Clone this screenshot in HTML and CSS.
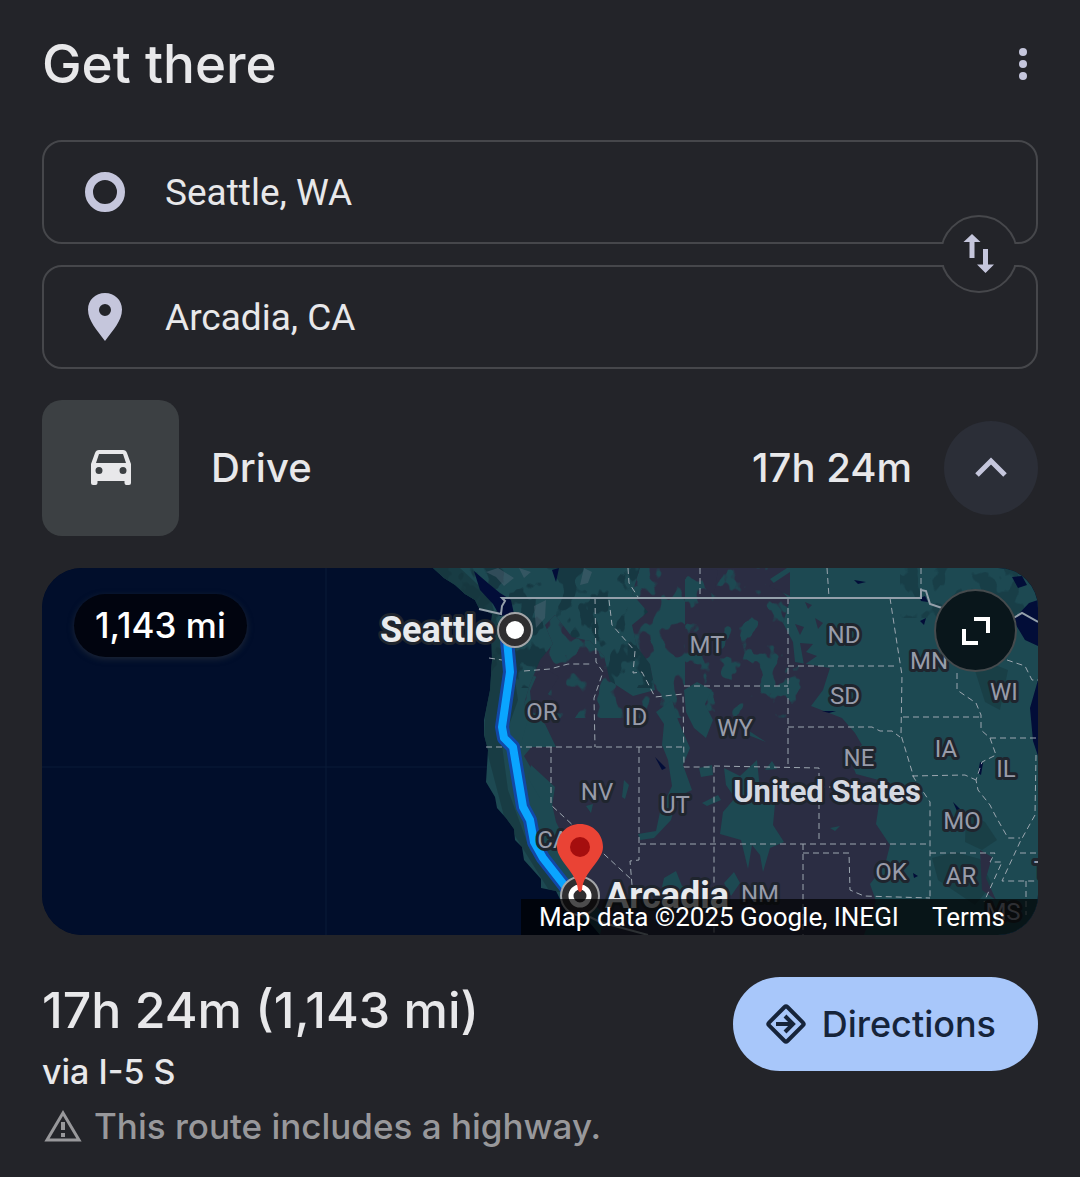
FILE: index.html
```html
<!DOCTYPE html>
<html lang="en">
  <head>
    <meta charset="UTF-8" />
    <meta name="viewport" content="width=device-width, initial-scale=1.0" />
    <title>Get there</title>
    <link rel="stylesheet" href="styles.css">
  </head>
  <body>
    <main class="card">
      <header class="header">
        <h1>Get there</h1>
        <button class="menu-btn" aria-label="More options">
          <svg width="10" height="34" viewBox="0 0 10 34">
            <circle cx="5" cy="5" r="4" /><circle cx="5" cy="17" r="4" /><circle cx="5" cy="29" r="4" />
          </svg>
        </button>
      </header>

      <form class="places">
        <label class="place">
          <svg class="place-icon" viewBox="0 0 50 50"><circle cx="25" cy="25" r="16" fill="none" stroke="#c5c6dc" stroke-width="8" /></svg>
          <input type="text" value="Seattle, WA" aria-label="Starting point" />
        </label>
        <label class="place">
          <svg class="place-icon" viewBox="0 0 50 50"><path fill="#c5c6dc" fill-rule="evenodd" d="M25 1C15.500 1 8 8 8 17.500C8 29 17 38 25 49C33 38 42 29 42 17.500C42 8 34.500 1 25 1ZM25 12a6 6 0 1 1 0 12a6 6 0 0 1 0-12Z" /></svg>
          <input type="text" value="Arcadia, CA" aria-label="Destination" />
        </label>
        <button type="button" class="swap-btn" aria-label="Swap start and destination">
          <svg width="32" height="40" viewBox="0 0 32 40"><path d="M9 0L17.500 8H11.500V24H6.500V8H0.500ZM22.500 39L14 30.500H20V15H25V30.500H31Z" /></svg>
        </button>
      </form>

      <section class="mode">
        <div class="mode-icon">
          <svg width="40" height="36" viewBox="0 0 40 36"><path fill="#e8e8ea" fill-rule="evenodd" d="M8 0H32Q35 0 36 3L40 14V33Q40 35 38 35H35.500Q33.500 35 33.500 33V31H6.500V33Q6.500 35 4.500 35H2Q0 35 0 33V14L4 3Q5 0 8 0ZM8 4L5 13H35L32 4ZM8 17a3.500 3.500 0 1 0 0 7a3.500 3.500 0 0 0 0-7ZM32 17a3.500 3.500 0 1 0 0 7a3.500 3.500 0 0 0 0-7Z" /></svg>
        </div>
        <h2>Drive</h2>
        <span class="mode-time">17h 24m</span>
        <button class="collapse-btn" aria-label="Collapse">
          <svg width="32" height="24" viewBox="0 0 32 24"><path d="M2 19L16 5L30 19" /></svg>
        </button>
      </section>

      <section class="map">
        <svg class="map-canvas" viewBox="42 568 996 367" preserveAspectRatio="xMidYMid slice">
          <defs>
            <path id="coast" d="M433 568L444 578L455 585L465 594L475 600L479 608L492 614L491 627L492 660L490 690L484 720L484 735L488 750L486 782L495 797L497 808L506 818L514 829L515 840L522 847L524 860L533 870L541 879L541 888L556 891L562 903L575 913L590 923L600 935H1040V568Z" />
            <clipPath id="land"><use href="#coast" /></clipPath>
            <path id="plateau" d="M540 660L553 644L545 625L555 615L572 637L590 641L604 656L610 681L633 696L655 690L650 664L637 647L632 625L648 612L632 594L640 568H787L770 579L790 600L783 623L793 642L795 662L830 668L823 690L811 706L842 718L855 733L862 745L848 754L856 774L890 783L879 804L876 824L890 845L885 865L870 884L876 901L864 935H600L604 915L595 905L590 887L579 870L567 844L556 822L552 804L535 775L524 756L533 745L540 725L524 704L530 684Z" />
            <clipPath id="dry"><use href="#plateau" /></clipPath>
            <!-- mottled vegetation -->
            <filter id="patches" x="0" y="0" width="100%" height="100%" color-interpolation-filters="sRGB">
              <feTurbulence type="fractalNoise" baseFrequency="0.040 0.032" numOctaves="3" seed="12" />
              <feColorMatrix values="0 0 0 0 0.114  0 0 0 0 0.286  0 0 0 0 0.322  20 0 0 0 -9.800" />
            </filter>
            <filter id="sparse-patches" x="0" y="0" width="100%" height="100%" color-interpolation-filters="sRGB">
              <feTurbulence type="fractalNoise" baseFrequency="0.050 0.040" numOctaves="3" seed="8" />
              <feColorMatrix values="0 0 0 0 0.114  0 0 0 0 0.286  0 0 0 0 0.322  20 0 0 0 -11.800" />
            </filter>
            <filter id="dark-patches" x="0" y="0" width="100%" height="100%" color-interpolation-filters="sRGB">
              <feTurbulence type="fractalNoise" baseFrequency="0.050 0.034" numOctaves="3" seed="5" />
              <feColorMatrix values="0 0 0 0 0.086  0 0 0 0 0.220  0 0 0 0 0.260  20 0 0 0 -10.500" />
            </filter>
          </defs>
          <rect x="42" y="568" width="996" height="367" fill="#010e2b" />
          <path class="grid" d="M326 568V935M42 767H500" />
          <use href="#coast" fill="#1d4952" />
          <g clip-path="url(#land)">
            <rect x="430" y="568" width="240" height="120" filter="url(#dark-patches)" />
            <rect x="900" y="568" width="140" height="50" filter="url(#dark-patches)" opacity=".6" />
            <path fill="#17383f" d="M433 568H460L490 596L497 622L512 660L518 700L502 745L508 790L530 850L570 892L550 892L505 820L484 740L490 620Z" opacity=".7" />
            <path fill="#17383f" d="M966 812L985 822L997 840L982 850L965 842ZM932 858L955 852L980 859L992 885L975 905L938 880ZM970 655L1008 670L1000 710L985 702Z" opacity=".6" />
          </g>
          <use href="#plateau" fill="#2b2d43" />
          <g clip-path="url(#dry)">
            <rect x="520" y="568" width="165" height="150" filter="url(#patches)" />
            <rect x="685" y="568" width="125" height="150" filter="url(#sparse-patches)" />
          </g>
          <g fill="#1d4952">
            <path d="M530 712L545 724L556 747H520ZM684 690L697 682L712 690L705 704L713 720L706 738L694 728L686 712Z" />
            <path d="M662 745L664 724L656 712L672 700L678 720L690 748L683 765L692 790L677 797L671 820L654 838L640 840L638 834L656 831L660 812L672 786L668 760Z" />
            <path d="M724 768L740 776L757 760L760 790L775 804L773 825L784 842L770 848L763 872L760 855L752 845L748 869L741 840L720 834L723 812L735 798L726 785Z" />
            <path d="M531 765L555 787L552 806L540 798L528 778ZM586 806L593 804L591 813ZM624 780L629 785L625 799L622 797ZM664 878L676 871L682 886L696 889L678 895L662 887ZM724 883L734 872L740 883L731 896ZM699 768L712 765L713 775L701 777ZM830 828L840 826L835 831Z" />
            <path d="M765 770L772 761L777 769ZM702 803L718 795L721 800L707 806ZM737 714L746 729L766 742L748 735Z" />
          </g>
          <g fill="#2b2d43">
            <path d="M795 624L804 627L800 635ZM800 643L813 644L806 652L817 656L804 665ZM815 618L823 623L818 629ZM805 602L812 605L808 609ZM980 850L992 857L986 878L996 900L982 890Z" />
            <path d="M541 666L559 677L548 694L560 704L546 718L532 712L530 691ZM700 569L718 570L714 595L705 588ZM790 572L790 596L769 586Z" />
          </g>
          <!-- lakes and sounds -->
          <g fill="#020d38">
            <path d="M474 571L489 584L500 593L511 600L514 614L500 616L493 604L480 590Z" />
            <path d="M1029 603L1038 600V646L1025 640L1013 620ZM1038 680L1030 708L1033 741L1038 756ZM1012 577L1022 576L1027 585L1018 588ZM920 598L925 596L928 602L921 601ZM920 621L926 618L924 625ZM854 580L866 582L858 584ZM655 757L666 768L662 770ZM822 711L836 711L829 713ZM552 570L559 568L556 582ZM983 763L981 775L978 773L980 762ZM953 802L960 809L957 811ZM913 873L918 876L914 878Z" />
          </g>
          <path fill="#536675" opacity=".45" d="M486 572L498 568L514 578L504 586L496 577ZM534 606L546 600L545 618L536 628ZM519 568L531 572L524 578ZM584 568L592 572L588 583L580 585Z" />
          <g class="states">
            <path d="M595 598L596 662L603 672L594 698L595 747M489 658L502 660M524 671L550 669L568 664L592 664M486 747H684" />
            <path d="M609 600L612 625L635 651L633 673L642 672L655 697L683 694L684 767H714V935M684 686H788M788 598V766" />
            <path d="M628 568L629 583L638 597M700 568V597M827 568L829 597M921 568V598" />
            <path d="M890 598L898 650L902 675L901 735L914 778L930 802V898M788 666H897M788 727H872L880 731L892 731L900 737M903 717H979" />
            <path d="M957 673V690L976 703L981 715V730L990 738L996 755L982 762L976 780L978 790L990 805L995 815L1008 838H1020M990 738H1036M912 776L965 775L976 780" />
            <path d="M639 747V860L630 861L632 885M551 747V805L632 880M640 844H930M714 766L819 768V840M819 787H915M803 844V935M803 853H849L850 890L864 896L930 898" />
            <path d="M930 853H995L990 862H1002L984 902M1036 755L1035 815L1020 842L1002 881H1037M1020 853H1037M1026 881V915M1007 660L1025 666L1032 680H1038" />
          </g>
          <path class="border" d="M479 609L501 614L502 606L505 601L502 598H921V590L926 591L930 604L948 610M1010 620L1022 613L1038 622M590 917L600 922L648 935" />
          <path class="route-edge" d="M507 640L510 672L502 727L504 738L513 747L523 807L530 820L534 842L543 858L568 890" />
          <path class="route" d="M507 640L510 672L502 727L504 738L513 747L523 807L530 820L534 842L543 858L568 890" />

          <g class="state-names">
            <text x="542" y="720">OR</text>
            <text x="636" y="725">ID</text>
            <text x="707" y="653">MT</text>
            <text x="735" y="736">WY</text>
            <text x="597" y="800">NV</text>
            <text x="675" y="813">UT</text>
            <text x="553" y="848">CA</text>
            <text x="844" y="643">ND</text>
            <text x="845" y="704">SD</text>
            <text x="929" y="669">MN</text>
            <text x="1004" y="700">WI</text>
            <text x="859" y="766">NE</text>
            <text x="946" y="757">IA</text>
            <text x="1006" y="777">IL</text>
            <text x="962" y="829">MO</text>
            <text x="891" y="880">OK</text>
            <text x="961" y="884">AR</text>
            <text x="760" y="902">NM</text>
            <text x="1003" y="920">MS</text>
            <text x="1041" y="878">T</text>
          </g>
          <text class="country" x="827" y="802">United States</text>
          <text class="city" x="437" y="642">Seattle</text>
          <text class="city" x="667" y="908">Arcadia</text>

          <circle cx="515" cy="630" r="17" fill="#2f2e30" stroke="#a3a5a8" stroke-width="2" />
          <circle cx="515" cy="630" r="9" fill="#fff" />
          <circle cx="580" cy="896" r="19" fill="#2f2e30" stroke="#a3a5a8" stroke-width="2" />
          <circle cx="580" cy="896" r="9" fill="none" stroke="#fff" stroke-width="5" />
          <path fill="#ea4335" d="M580 824C567 824 557 834 557 847C557 861 577 872 578 890Q580 894 582 890C583 872 603 861 603 847C603 834 593 824 580 824Z" />
          <circle cx="580" cy="847" r="10" fill="#a50e0e" />
        </svg>
        <span class="distance">1,143 mi</span>
        <button class="expand-btn" aria-label="Expand map">
          <svg width="30" height="30" viewBox="0 0 30 30"><path d="M13 3H27V17M3 13V27H17" /></svg>
        </button>
        <div class="attribution">
          <span>Map data ©2025 Google, INEGI</span>
          <a href="#">Terms</a>
        </div>
      </section>

      <footer class="summary">
        <div class="summary-text">
          <h3>17h 24m (1,143 mi)</h3>
          <p class="via">via I-5 S</p>
          <p class="warning">
            <svg width="40" height="34" viewBox="0 0 40 34"><path fill="none" stroke="#98989b" stroke-width="3" d="M21 4L37 31H5Z" /><path fill="#98989b" d="M19 13h4v8h-4zM19 24h4v4h-4z" /></svg>
            This route includes a highway.
          </p>
        </div>
        <button class="directions-btn">
          <svg width="40" height="40" viewBox="0 0 40 40"><rect x="7" y="7" width="26" height="26" rx="2" transform="rotate(45 20 20)" /><path d="M10 20H27M19 12L27 20L19 28" /></svg>
          Directions
        </button>
      </footer>
    </main>
  </body>
</html>
```
FILE: styles.css
```css
* {
  box-sizing: border-box;
}

body {
  margin: 0;
  background-color: #232429;
  color: #e8e8ea;
  font-family: Inter, "Open Sans", sans-serif;
}

h1, h2, h3, p {
  margin: 0;
  font-weight: 500;
}

button {
  display: flex;
  align-items: center;
  justify-content: center;
  padding: 0;
  border: none;
  background: none;
  color: inherit;
  font-family: inherit;
  cursor: pointer;
}

.card {
  padding: 28px 42px;
}

.header {
  display: flex;
  align-items: center;
  justify-content: space-between;
  height: 72px;
  margin-bottom: 40px;
}

h1 {
  font-size: 53px;
  line-height: 72px;
}

.menu-btn {
  width: 30px;
  height: 48px;
  fill: #c5c6dc;
}

/* start and destination */
.places {
  position: relative;
  display: grid;
  gap: 21px;
  margin-bottom: 31px;
}

.place {
  display: flex;
  align-items: center;
  gap: 35px;
  height: 104px;
  padding: 0 36px;
  border: 2px solid #46474b;
  border-radius: 20px;
}

.place-icon {
  width: 50px;
  height: 50px;
  flex-shrink: 0;
}

.place input {
  flex: 1;
  min-width: 0;
  padding: 0;
  border: none;
  outline: none;
  background: none;
  color: #e8e8ea;
  font-family: Roboto, sans-serif;
  font-size: 37px;
}

.swap-btn {
  position: absolute;
  top: 50%;
  right: 20px;
  width: 78px;
  height: 78px;
  margin-top: -40px;
  border: 2px solid #46474b;
  border-radius: 50%;
  background-color: #232429;
  fill: #c5c6dc;
}

/* opens the circle between the two boxes */
.swap-btn::before {
  content: "";
  position: absolute;
  top: 27px;
  left: -4px;
  right: -4px;
  height: 21px;
  background-color: #232429;
}

.swap-btn svg {
  position: relative;
}

/* travel mode */
.mode {
  display: flex;
  align-items: center;
  gap: 32px;
  margin-bottom: 32px;
}

.mode-icon {
  display: flex;
  align-items: center;
  justify-content: center;
  width: 137px;
  height: 136px;
  border-radius: 20px;
  background-color: #3c4043;
}

h2,
.mode-time {
  padding-bottom: 2px;
  font-size: 40px;
  font-weight: 500;
}

.mode-time {
  margin-left: auto;
}

.collapse-btn {
  width: 94px;
  height: 94px;
  border-radius: 50%;
  background-color: #2b2e37;
}

.collapse-btn svg {
  fill: none;
  stroke: #c5c6dc;
  stroke-width: 5;
}

/* map */
.map {
  position: relative;
  overflow: hidden;
  margin-bottom: 42px;
  border-radius: 40px;
  background-color: #010e2b;
  aspect-ratio: 996 / 367;
}

.map-canvas {
  display: block;
  width: 100%;
  height: 100%;
  font-family: Roboto, sans-serif;
  text-anchor: middle;
}

.map-canvas text {
  paint-order: stroke;
  stroke: #1f252e;
  stroke-width: 6px;
  stroke-linejoin: round;
}

.grid {
  fill: none;
  stroke: #0b1a38;
}

.states {
  fill: none;
  stroke: #9da7b0;
  stroke-width: 1px;
  stroke-dasharray: 6 4;
}

.border {
  fill: none;
  stroke: #94a0ab;
  stroke-width: 2px;
}

.route,
.route-edge {
  fill: none;
  stroke: #0aa5ff;
  stroke-width: 8px;
  stroke-linejoin: round;
}

.route-edge {
  stroke: #1248a6;
  stroke-width: 14px;
}

.state-names {
  fill: #989caa;
  font-size: 24px;
}

.country {
  fill: #d5d9e2;
  font-size: 31px;
  font-weight: 700;
}

.city {
  fill: #e8eaed;
  font-size: 36px;
  font-weight: 700;
}

.distance {
  position: absolute;
  top: 26px;
  left: 32px;
  padding: 0 21px;
  border-radius: 32px;
  background-color: #01040f;
  box-shadow: 0 2px 6px rgba(60, 64, 67, 0.5);
  color: #fff;
  font-size: 35px;
  font-weight: 500;
  line-height: 63px;
}

.expand-btn {
  position: absolute;
  top: 21px;
  right: 21px;
  width: 83px;
  height: 83px;
  border: 2px solid #454a4d;
  border-radius: 50%;
  background-color: #09161b;
}

.expand-btn svg {
  fill: none;
  stroke: #fff;
  stroke-width: 4;
}

.attribution {
  position: absolute;
  right: 0;
  bottom: 0;
  display: flex;
  gap: 33px;
  padding: 0 33px 0 18px;
  background-color: rgba(0, 0, 0, 0.7);
  color: #fff;
  font-family: Roboto, sans-serif;
  font-size: 26px;
  line-height: 36px;
}

.attribution a {
  color: inherit;
  text-decoration: none;
}

/* route summary */
.summary {
  display: flex;
  align-items: flex-start;
  justify-content: space-between;
}

h3 {
  font-size: 50px;
  line-height: 66px;
}

.via {
  font-size: 34px;
  line-height: 58px;
}

.warning {
  display: flex;
  align-items: center;
  gap: 12px;
  color: #98989b;
  font-size: 35px;
  line-height: 50px;
}

.directions-btn {
  gap: 16px;
  height: 94px;
  padding: 0 42px 0 33px;
  border-radius: 47px;
  background-color: #a8c7fa;
  color: #16243a;
  font-size: 36px;
  font-weight: 500;
}

.directions-btn svg {
  fill: none;
  stroke: #16243a;
  stroke-width: 4;
}
```
